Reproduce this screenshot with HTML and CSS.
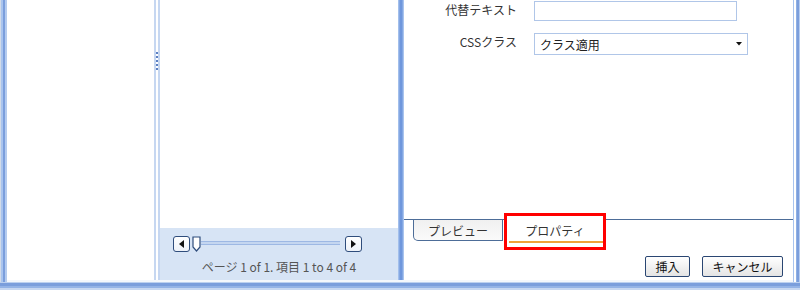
FILE: index.html
```html
<!DOCTYPE html>
<html lang="ja">
<head>
<meta charset="utf-8">
<link rel="stylesheet" href="styles.css">
</head>
<body>
<div class="window">
  <div class="body">
    <div class="frame-l"></div>
    <div class="content">
      <div class="panes">
        <div class="pane-left"></div>
        <div class="splitter">
          <span class="dot"></span><span class="dot"></span><span class="dot"></span><span class="dot"></span><span class="dot"></span>
        </div>
        <div class="pane-mid">
          <div class="list"></div>
          <div class="pager">
            <div class="slider">
              <div class="sbtn"><svg width="5" height="8" viewBox="0 0 5 8"><path d="M5 0 L0 4 L5 8 Z" fill="#111"/></svg></div>
              <svg class="thumb" width="9" height="16" viewBox="0 0 9 16"><path d="M1 1 H8 V11 L4.5 15 L1 11 Z" fill="#fff" stroke="#2f4d7c" stroke-width="1.2"/></svg>
              <div class="track"></div>
              <div class="sbtn"><svg width="5" height="8" viewBox="0 0 5 8"><path d="M0 0 L5 4 L0 8 Z" fill="#111"/></svg></div>
            </div>
            <div class="pinfo">ページ 1 of 1. 項目 1 to 4 of 4</div>
          </div>
        </div>
        <div class="bar"></div>
        <div class="pane-right">
          <div class="form">
            <div class="label">代替テキスト</div>
            <div class="input"></div>
            <div class="label">CSSクラス</div>
            <div class="select"><span>クラス適用</span><svg width="6" height="4" viewBox="0 0 6 4"><path d="M0 0 H6 L3 3.5 Z" fill="#111"/></svg></div>
          </div>
          <div class="tabs">
            <div class="tab">プレビュー</div>
            <div class="tab tab-sel">プロパティ</div>
          </div>
          <div class="buttons">
            <div class="btn btn-ins">挿入</div>
            <div class="btn btn-cancel">キャンセル</div>
          </div>
        </div>
      </div>
      <div class="gap"></div>
    </div>
    <div class="frame-r"></div>
  </div>
  <div class="frame-b"></div>
</div>
</body>
</html>
```

FILE: styles.css
```css
html, body {
  margin: 0;
  padding: 0;
  background: #ffffff;
}
body {
  font-family: "Noto Sans CJK JP", "Noto Sans", sans-serif;
  font-size: 12px;
  color: #333;
}
.window {
  width: 800px;
  height: 290px;
  display: flex;
  flex-direction: column;
}
.body {
  display: flex;
  height: 282px;
}
.frame-l {
  width: 7px;
  background: linear-gradient(to right, #d2dbe8 0 1px, #a9c4ee 1px 3px, #7b9edc 3px 5px, #b4cbef 5px 7px);
}
.frame-r {
  width: 7px;
  background: linear-gradient(to right, #a9c4ee 0 1px, #ffffff 1px 3px, #8fb0e4 3px 4px, #7b9edc 4px 6px, #b4cbef 6px 7px);
}
.frame-b {
  height: 8px;
  background: linear-gradient(to bottom, #bcd0ef 0 1px, #7b9edc 1px 4px, #94b3e6 4px 6px, #c7d7f1 6px 8px);
}
.content {
  width: 786px;
  display: flex;
  flex-direction: column;
}
.panes {
  height: 280px;
  display: flex;
}
.gap {
  height: 2px;
  background: #f4f7fc;
}
.pane-left {
  width: 147px;
  background: #fff;
}
.splitter {
  width: 2px;
  border-left: 2px solid #c6d7f1;
  border-right: 2px solid #c6d7f1;
  background: #fff;
  display: flex;
  flex-direction: column;
  align-items: center;
  padding-top: 52px;
  gap: 2px;
  box-sizing: content-box;
}
.dot {
  width: 2px;
  height: 2px;
  background: #5b7fc2;
  flex: none;
}
.pane-mid {
  width: 238px;
  display: flex;
  flex-direction: column;
}
.list {
  height: 228px;
  background: #fff;
}
.pager {
  flex: 1;
  background: #d7e4f5;
  padding-top: 8px;
  box-sizing: border-box;
}
.slider {
  display: flex;
  align-items: flex-start;
  padding-left: 13px;
  height: 16px;
}
.sbtn {
  width: 17px;
  height: 16px;
  box-sizing: border-box;
  border: 1.5px solid #2f4d7c;
  border-radius: 3px;
  background: linear-gradient(#ffffff, #eef2f8);
  display: flex;
  align-items: center;
  justify-content: center;
}
.thumb {
  margin-left: 2px;
  display: block;
}
.track {
  width: 139px;
  height: 4px;
  margin-top: 5px;
  margin-right: 5px;
  background: linear-gradient(to bottom, #9db8e4 0 1px, #c4d6f0 1px 3px, #9db8e4 3px 4px);
}
.pinfo {
  margin-top: 7px;
  text-align: center;
  color: #555;
  line-height: 16px;
  font-size: 12px;
}
.bar {
  width: 6px;
  background: linear-gradient(to right, #a2bfec 0 1px, #84a7e2 1px 2px, #6f97dc 2px 4px, #84a7e2 4px 5px, #a9c4ee 5px 6px);
}
.pane-right {
  width: 389px;
  display: flex;
  flex-direction: column;
  background: #fff;
}
.form {
  display: grid;
  grid-template-columns: 113px auto;
  column-gap: 17px;
  row-gap: 12px;
  margin-top: 1px;
  justify-items: start;
}
.label {
  justify-self: end;
  line-height: 16px;
  margin-top: 1px;
  color: #333;
}
.input {
  width: 203px;
  height: 20px;
  box-sizing: border-box;
  border: 1px solid #b0c6e8;
  background: #fff;
}
.select {
  width: 214px;
  height: 22px;
  box-sizing: border-box;
  border: 1px solid #b0c6e8;
  background: #fff;
  display: flex;
  align-items: center;
  justify-content: space-between;
  padding: 0 5px 0 5px;
  color: #222;
}
.select span {
  line-height: 16px;
  margin-top: 1px;
}
.tabs {
  margin-top: auto;
  border-top: 1px solid #4d6d98;
  height: 36px;
  display: flex;
  align-items: flex-start;
  padding-left: 9px;
}
.tab {
  width: 90px;
  height: 21px;
  box-sizing: border-box;
  border: 1px solid #4d6d98;
  border-top: none;
  border-radius: 0 0 0 5px;
  background: linear-gradient(#f0f0f0, #fafafa);
  text-align: center;
  line-height: 20px;
  padding-top: 1px;
  color: #333;
}
.tab-sel {
  position: relative;
  width: 98px;
  height: 24px;
  margin-top: -1px;
  margin-left: 3px;
  border: none;
  border-radius: 0;
  background: #fff;
  padding-top: 2px;
}
.tab-sel::before {
  content: "";
  position: absolute;
  left: 3px;
  right: 1px;
  top: 22px;
  height: 2px;
  background: #f0a23a;
}
.tab-sel::after {
  content: "";
  position: absolute;
  left: -2px;
  top: -6px;
  width: 102px;
  height: 37px;
  box-sizing: border-box;
  border: 3px solid #ff0000;
}
.buttons {
  display: flex;
  justify-content: flex-end;
  gap: 12px;
  padding-right: 10px;
  margin-bottom: 3px;
}
.btn {
  height: 21px;
  box-sizing: border-box;
  border: 1px solid #2a4672;
  border-radius: 2px;
  background: linear-gradient(#ffffff, #e4e4e4);
  text-align: center;
  line-height: 19px;
  color: #111;
}
.btn-ins {
  width: 45px;
}
.btn-cancel {
  width: 81px;
}
```
